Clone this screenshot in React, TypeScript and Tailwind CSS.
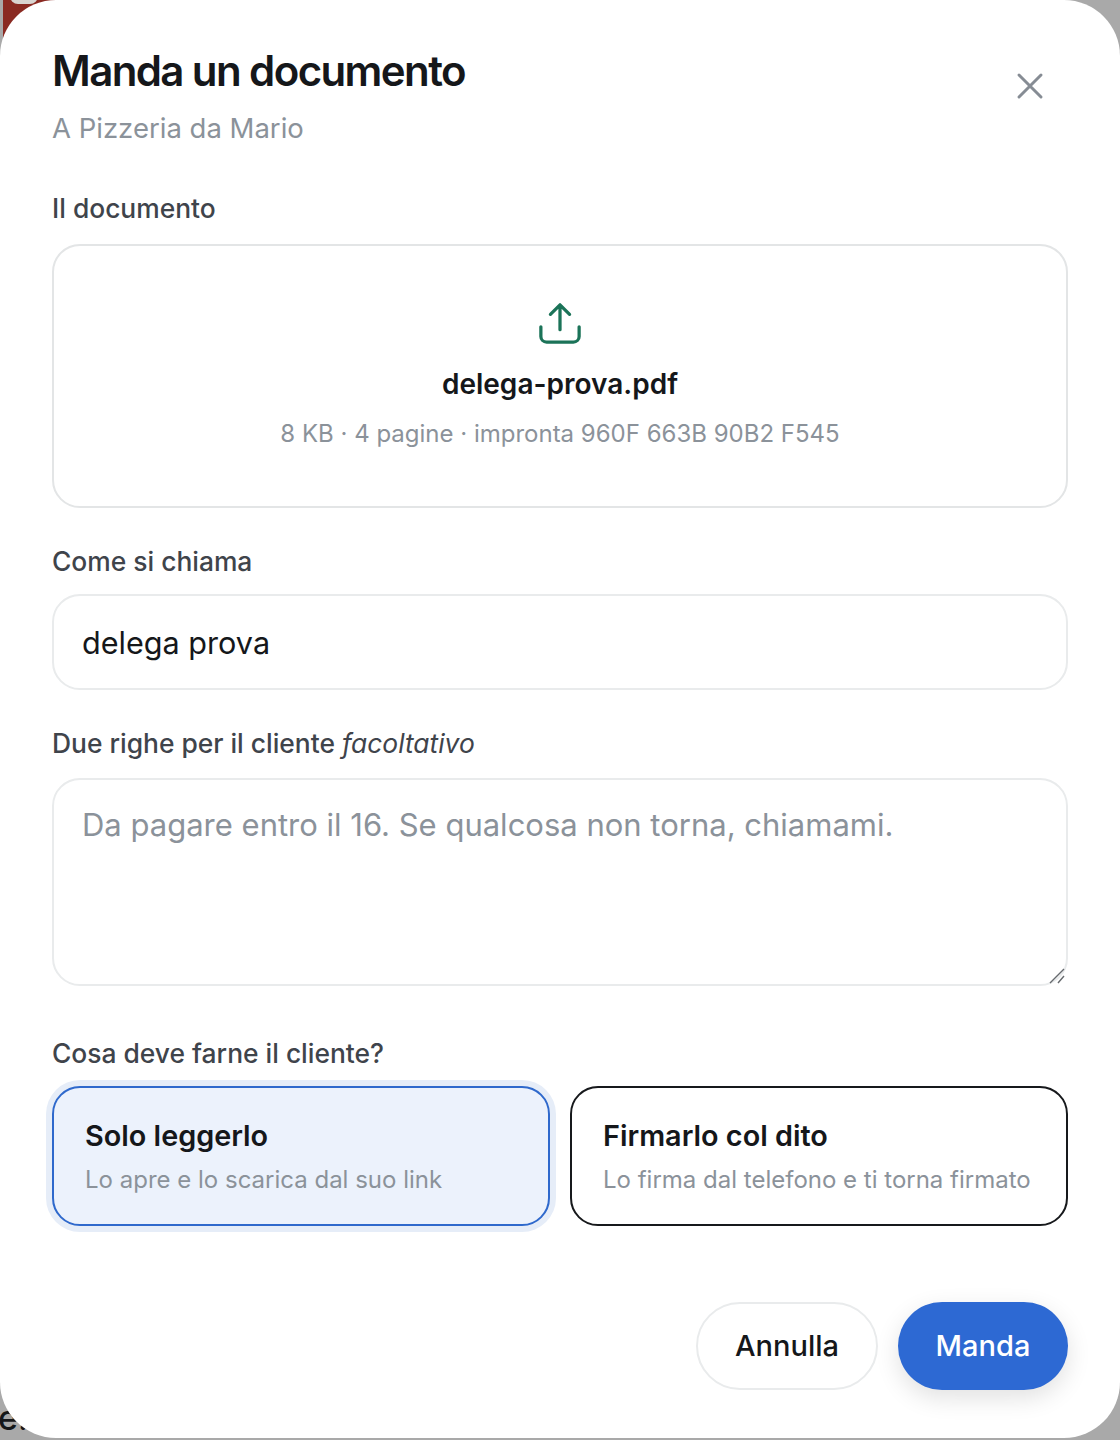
import React from 'react';

const LABEL = 'block text-[26.4px] leading-[34px] font-medium text-[#3f444b]';
const FONT = { fontFamily: 'Inter, "Noto Sans", sans-serif' };

const ChoiceCard: React.FC<{ title: string; hint: string; selected?: boolean }> = ({ title, hint, selected }) => (
  <button
    type="button"
    className={
      'h-[140px] rounded-[28px] border-2 px-[31px] pt-[1px] text-left ' +
      (selected ? 'border-[#2f69cc] bg-[#ecf2fc] shadow-[0_0_0_6px_#e6edf8]' : 'border-[#17191c] bg-white')
    }
  >
    <span className="block text-[28.8px] leading-[38px] font-semibold text-[#15171a]">{title}</span>
    <span className="mt-[8px] block text-[24px] leading-[34px] text-[#8b929a] whitespace-nowrap">{hint}</span>
  </button>
);

export default function App() {
  return (
    <div className="relative h-[1440px] w-[1120px] overflow-hidden bg-[#a9a9a9]" style={FONT}>
      {/* resti della pagina sotto il modale */}
      <div className="absolute left-[3px] top-0 h-[70px] w-[60px] bg-[#8a2a22]" />
      <div className="absolute left-[10px] top-[-12px] h-[16px] w-[28px] rounded-full bg-[#d8d4d0]" />
      <div className="absolute left-[-2px] top-[1398px] text-[34px] leading-[40px] font-medium text-[#15171a]">e.</div>

      <div className="relative h-[1438px] rounded-[56px] bg-white px-[52px]">
        <div className="flex items-start justify-between pt-[44px]">
          <div>
            <h1 className="text-[42px] leading-[54px] font-semibold tracking-[-1.6px] text-[#15171a]">Manda un documento</h1>
            <p className="mt-[11px] text-[27.5px] leading-[38px] text-[#8b929a]">A Pizzeria da Mario</p>
          </div>
          <button type="button" className="mr-[22px] mt-[26px] text-[#868c94]">
            <svg width="32" height="32" viewBox="0 0 32 32" fill="none" stroke="currentColor" strokeWidth="3" strokeLinecap="round">
              <path d="M5 5l22 22M27 5L5 27" />
            </svg>
          </button>
        </div>

        <label className={LABEL + ' mt-[44px]'}>Il documento</label>
        <div className="mt-[19px] flex h-[264px] flex-col items-center rounded-[28px] border-2 border-[#e3e5e6]">
          <svg className="mt-[55px]" width="44" height="44" viewBox="0 0 46 46" fill="none" stroke="#1b7358" strokeWidth="3.4" strokeLinecap="round" strokeLinejoin="round">
            <path d="M23 30V4M13 14L23 4l10 10" />
            <path d="M3 27v10a6 6 0 0 0 6 6h28a6 6 0 0 0 6-6V27" />
          </svg>
          <div className="mt-[20px] text-[28px] leading-[38px] font-semibold text-[#15171a]">delega-prova.pdf</div>
          <div className="mt-[13px] text-[24px] leading-[36px] text-[#8b929a]">8 KB · 4 pagine · impronta 960F 663B 90B2 F545</div>
        </div>

        <label className={LABEL + ' mt-[36px]'}>Come si chiama</label>
        <input
          readOnly
          value="delega prova"
          className="mt-[16px] block h-[96px] w-full rounded-[28px] border-2 border-[#e9ebec] px-[28px] text-[30.6px] text-[#15171a] outline-none"
        />

        <label className={LABEL + ' mt-[36px]'}>
          Due righe per il cliente <em className="font-normal">facoltativo</em>
        </label>
        <div className="relative mt-[18px]">
          <textarea
            placeholder="Da pagare entro il 16. Se qualcosa non torna, chiamami."
            className="block h-[208px] w-full resize-none rounded-[28px] border-2 border-[#e9ebec] px-[28px] py-[23px] text-[31px] leading-[44px] text-[#15171a] outline-none placeholder:text-[#8b929a]"
          />
          <svg className="absolute bottom-[2px] right-[2px]" width="18" height="18" viewBox="0 0 18 18" fill="none" stroke="#666a6e" strokeWidth="1.4">
            <path d="M2 17L16 3M10 17l6-7" />
          </svg>
        </div>

        <label className={LABEL + ' mt-[50px]'}>Cosa deve farne il cliente?</label>
        <div className="mt-[16px] grid grid-cols-2 gap-[20px]">
          <ChoiceCard title="Solo leggerlo" hint="Lo apre e lo scarica dal suo link" selected />
          <ChoiceCard title="Firmarlo col dito" hint="Lo firma dal telefono e ti torna firmato" />
        </div>

        <div className="mt-[76px] flex justify-end gap-[20px]">
          <button type="button" className="h-[88px] w-[182px] rounded-full border-2 border-[#e9ebec] bg-white text-[29px] font-medium text-[#15171a]">
            Annulla
          </button>
          <button type="button" className="h-[88px] w-[170px] rounded-full bg-[#2d69d3] text-[29px] font-medium text-white shadow-[0_8px_24px_rgba(0,0,0,0.12)]">
            Manda
          </button>
        </div>
      </div>
    </div>
  );
}
